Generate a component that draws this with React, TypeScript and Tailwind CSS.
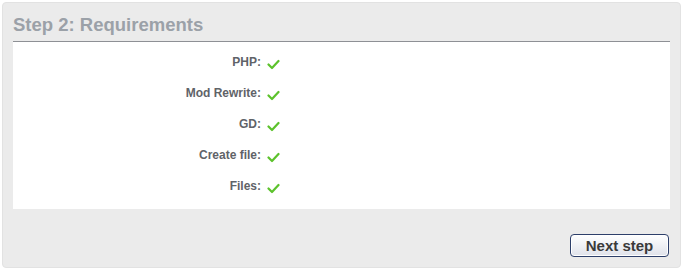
import React from "react";

const Check = () => (
  <svg width="13" height="11" viewBox="0 0 13 11" className="ml-[6px] mt-[4px]">
    <path d="M1.5 5.5 L5 9 L11.5 2" fill="none" stroke="#5cc22c" strokeWidth="2.2" strokeLinecap="round" strokeLinejoin="round" />
  </svg>
);

const rows = ["PHP:", "Mod Rewrite:", "GD:", "Create file:", "Files:"];

export default function App() {
  return (
    <div className="w-[683px] h-[271px] bg-white p-[2px]" style={{ fontFamily: "Arial, 'Liberation Sans', sans-serif" }}>
      <div className="h-[266px] w-[679px] rounded-[4px] bg-[#ebebeb] border border-[#e2e2e2] px-[10px] pt-[9px]">
        <h1 className="text-[18.5px] font-bold text-[#9ba1a8] leading-[20px] h-[29px] pt-[3px]">Step 2: Requirements</h1>
        <div className="bg-white border-t border-[#8e9095] h-[168px] pt-[13px]">
          {rows.map((r) => (
            <div key={r} className="flex h-[31px] items-start">
              <div className="w-[248px] text-right text-[12px] font-bold text-[#5f6368] leading-[14px]">{r}</div>
              <Check />
            </div>
          ))}
        </div>
        <div className="flex justify-end mt-[25px] pr-[1px]">
          <button className="w-[99px] h-[23px] rounded-[4px] border border-[#2d3f6a] bg-gradient-to-b from-white to-[#dfe2ea] text-[15px] font-bold text-[#3a3a3a] leading-[20px] shadow-[inset_0_0_0_1px_#ffffff]">
            Next step
          </button>
        </div>
      </div>
    </div>
  );
}
